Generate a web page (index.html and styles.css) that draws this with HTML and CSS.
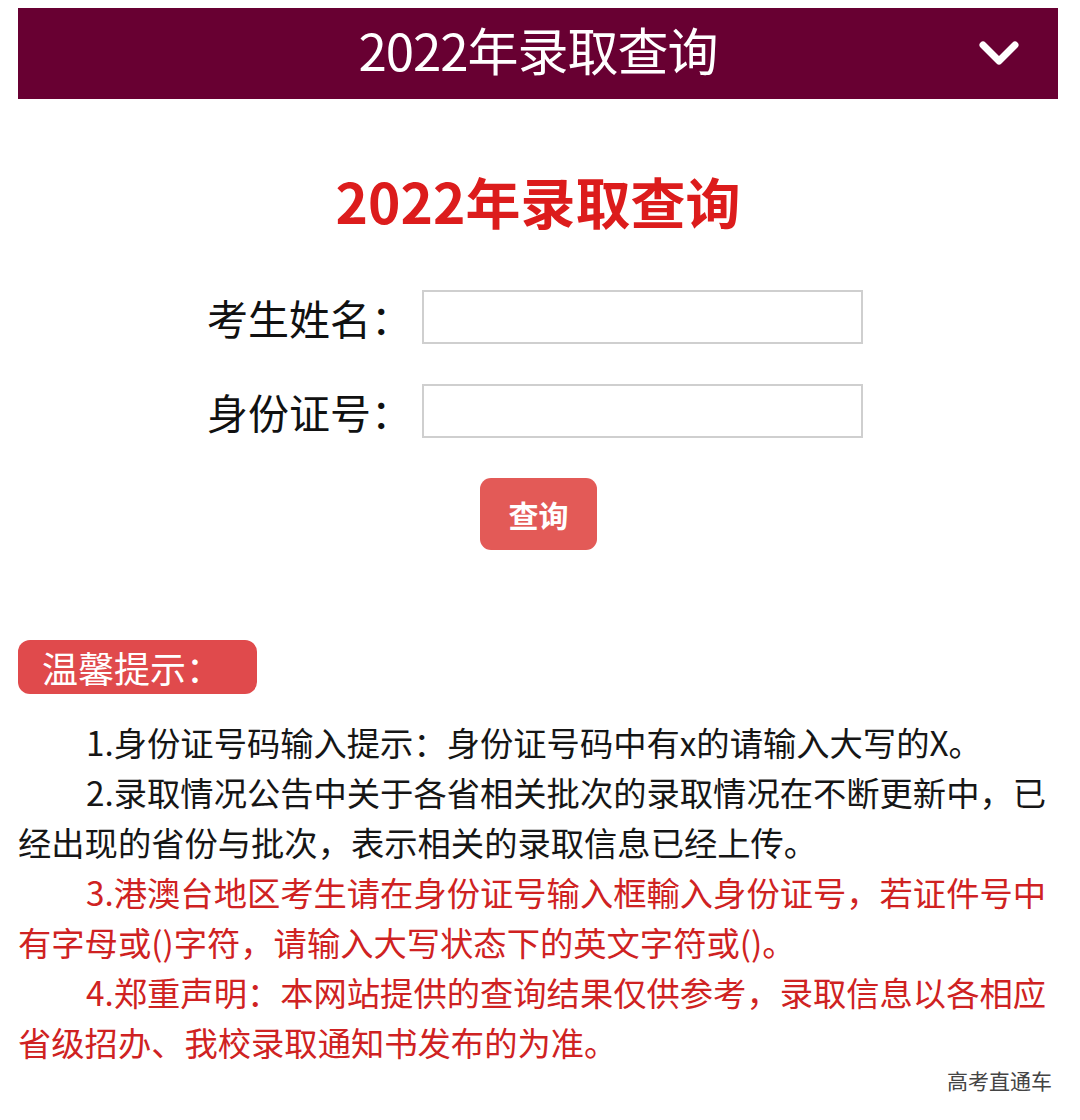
FILE: index.html
```html
<!DOCTYPE html>
<html lang="zh-CN">
<head>
<meta charset="utf-8">
<title>2022年录取查询</title>
<link rel="stylesheet" href="styles.css">
</head>
<body>
<div class="page">
  <header class="topbar">
    <span class="spacer"></span>
    <h1 class="topbar-title">2022年录取查询</h1>
    <svg class="chevron" width="40" height="26" viewBox="0 0 40 26"><path d="M4 4 L20 20 L36 4" fill="none" stroke="#fff" stroke-width="7" stroke-linecap="round" stroke-linejoin="round"/></svg>
  </header>

  <h2 class="main-title">2022年录取查询</h2>

  <form class="query-form">
    <div class="form-row">
      <label class="form-label">考生姓名：</label>
      <input class="form-input" type="text">
    </div>
    <div class="form-row">
      <label class="form-label">身份证号：</label>
      <input class="form-input" type="text">
    </div>
    <div class="btn-row">
      <button class="query-btn" type="button">查询</button>
    </div>
  </form>

  <div class="tip-badge">温馨提示：</div>

  <div class="notes">
    <p class="note">1.身份证号码输入提示：身份证号码中有x的请输入大写的X。</p>
    <p class="note">2.录取情况公告中关于各省相关批次的录取情况在不断更新中，已经出现的省份与批次，表示相关的录取信息已经上传。</p>
    <p class="note red">3.港澳台地区考生请在身份证号输入框輸入身份证号，若证件号中有字母或()字符，请输入大写状态下的英文字符或()。</p>
    <p class="note red">4.郑重声明：本网站提供的查询结果仅供参考，录取信息以各相应省级招办、我校录取通知书发布的为准。</p>
  </div>

  <div class="watermark">高考直通车</div>
</div>
</body>
</html>
```

FILE: styles.css
```css
* { box-sizing: border-box; }
html, body { margin: 0; padding: 0; background: #fff; }
body {
  font-family: "Noto Sans CJK SC", "Noto Sans", "Liberation Sans", sans-serif;
  color: #1a1a1a;
}
.page {
  width: 1080px;
  padding: 8px 22px 0 18px;
}
.topbar {
  height: 91px;
  background: #680032;
  display: grid;
  grid-template-columns: 1fr auto 1fr;
  align-items: center;
}
.topbar-title {
  margin: 0 0 8px 0;
  font-size: 51px;
  font-weight: 400;
  color: #fff;
  line-height: 1;
  letter-spacing: -1px;
}
.chevron {
  justify-self: end;
  margin-right: 39px;
  margin-top: 0;
}
.main-title {
  margin: 66px 0 0 0;
  height: 70px;
  line-height: 70px;
  text-align: center;
  font-size: 55px;
  font-weight: 700;
  color: #dc1c1c;
}
.query-form {
  margin-top: 55px;
  display: flex;
  flex-direction: column;
  gap: 40px;
}
.form-row {
  display: flex;
  align-items: center;
  padding-left: 189px;
}
.form-label {
  font-size: 41px;
  line-height: 54px;
  color: #111;
  width: 215px;
}
.form-input {
  width: 441px;
  height: 54px;
  border: 2px solid #cfcfcf;
  background: #fff;
  margin: 0;
}
.btn-row {
  display: flex;
  justify-content: center;
}
.query-btn {
  width: 117px;
  height: 72px;
  border: none;
  border-radius: 11px;
  background: #e35a57;
  color: #fff;
  font-family: inherit;
  font-size: 30px;
  font-weight: 700;
  margin-left: 1px;
  padding: 0;
}
.tip-badge {
  margin-top: 90px;
  width: 239px;
  height: 54px;
  border-radius: 12px;
  background: #e04a4c;
  color: #fff;
  font-size: 36px;
  line-height: 54px;
  padding-left: 24px;
}
.notes {
  margin-top: 23px;
}
.note {
  margin: 0;
  font-size: 33.3px;
  line-height: 50px;
  text-indent: 68px;
  color: #161616;
}
.note.red {
  color: #cf2222;
}
.watermark {
  text-align: right;
  font-size: 21px;
  line-height: 26px;
  color: #444;
  margin-right: 6px;
  margin-top: 0;
}
```
